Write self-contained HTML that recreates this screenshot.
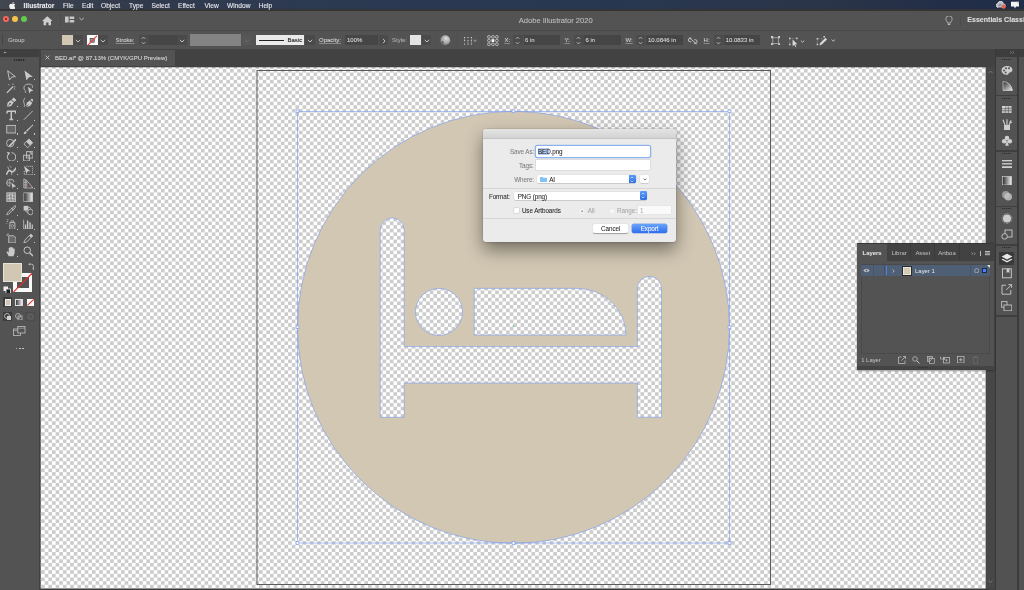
<!DOCTYPE html>
<html><head><meta charset="utf-8">
<style>
*{box-sizing:border-box}
html,body{margin:0;padding:0}
body{will-change:transform;width:1024px;height:590px;overflow:hidden;position:relative;background:#424242;font-family:"Liberation Sans",sans-serif;color:#d6d6d6}
.a{position:absolute}
span{-webkit-text-stroke:0.1px currentColor}
#dialog span{-webkit-text-stroke:0.05px currentColor}
#layers span{-webkit-text-stroke:0.03px currentColor}
#menubar{left:0;top:0;width:1024px;height:10.9px;overflow:hidden;background:linear-gradient(#0000 0 9.5px,#343434 9.5px),linear-gradient(90deg,#43474f 0%,#3b414d 4%,#313a4d 14%,#2c3a52 30%,#283750 60%,#2b3549 80%,#222e47 92%,#212e47 100%);color:#e8e8ec;font-size:7px;line-height:11.2px}
#menubar span{position:absolute;top:0;white-space:nowrap;font-size:6.6px}
#titlebar{left:0;top:10.9px;width:1024px;height:19.4px;background:#535353}
#controlbar{left:0;top:30.3px;width:1024px;height:18.8px;background:#535353;border-top:1.2px solid #4a4a4a;padding:0}
#tabbar{left:39px;top:49.1px;width:957px;height:18.2px;background:#424242}
#toolbar{left:0;top:49.1px;width:39px;height:541px;background:#535353}
#tbhead{left:0;top:49.1px;width:39px;height:7.5px;background:#3f3f3f}
.t6{font-size:6px;line-height:8px;top:4.6px;white-space:nowrap}
.u{text-decoration:underline;text-decoration-color:#8a8a8a;text-underline-offset:1px}
#vscroll{left:985.7px;top:67.3px;width:9px;height:520.6px;background:#474747}
#dock{left:994.5px;top:49.1px;width:29.5px;height:541px;background:#3d3d3d}
</style></head><body>
<svg class="a" style="left:0;top:0" width="1024" height="590" viewBox="0 0 1024 590">
<defs>
<pattern id="chk" patternUnits="userSpaceOnUse" x="41.1" y="65.3" width="7.265" height="7.265">
<rect x="0" y="0" width="7.265" height="7.265" fill="#ffffff"/>
<rect x="3.6325" y="0" width="3.6325" height="3.6325" fill="#cccccc"/>
<rect x="0" y="3.6325" width="3.6325" height="3.6325" fill="#cccccc"/>
</pattern>
</defs>
<rect x="40.7" y="67.3" width="945" height="521.2" fill="url(#chk)"/>
<rect x="257" y="70.5" width="513.5" height="514" fill="none" stroke="#5a5a5a" stroke-width="1"/>
<path fill="#d2c7b3" fill-rule="evenodd" d="M297.5,327.3 A216,216 0 1 0 729.5,327.3 A216,216 0 1 0 297.5,327.3 Z
M380.2,417.3 L380.2,230 A12,12 0 0 1 404.2,230 L404.2,346.6 L637.4,346.6 L637.4,288.5 A12.05,12.05 0 0 1 661.5,288.5 L661.5,417.2 L637.4,417.2 L637.4,383 L404.2,383 L404.2,417.3 Z
M415.5,311.9 A23.5,23.5 0 1 0 462.5,311.9 A23.5,23.5 0 1 0 415.5,311.9 Z
M474.2,288.4 L577,288.4 A49,46.6 0 0 1 626,335 L474.2,335 Z"/>
<g fill="none" stroke="#7f9ff0" stroke-width="0.65">
<path d="M297.5,327.3 A216,216 0 1 0 729.5,327.3 A216,216 0 1 0 297.5,327.3 Z
M380.2,417.3 L380.2,230 A12,12 0 0 1 404.2,230 L404.2,346.6 L637.4,346.6 L637.4,288.5 A12.05,12.05 0 0 1 661.5,288.5 L661.5,417.2 L637.4,417.2 L637.4,383 L404.2,383 L404.2,417.3 Z
M415.5,311.9 A23.5,23.5 0 1 0 462.5,311.9 A23.5,23.5 0 1 0 415.5,311.9 Z
M474.2,288.4 L577,288.4 A49,46.6 0 0 1 626,335 L474.2,335 Z"/>
<rect x="297.5" y="111.3" width="432" height="431.7"/>
</g>
<g fill="#fff" stroke="#7f9ff0" stroke-width="0.7">
<rect x="296.1" y="109.9" width="2.8" height="2.8"/>
<rect x="512.1" y="109.9" width="2.8" height="2.8"/>
<rect x="728.1" y="109.9" width="2.8" height="2.8"/>
<rect x="296.1" y="325.9" width="2.8" height="2.8"/>
<rect x="728.1" y="325.9" width="2.8" height="2.8"/>
<rect x="296.1" y="541.6" width="2.8" height="2.8"/>
<rect x="512.1" y="541.6" width="2.8" height="2.8"/>
<rect x="728.1" y="541.6" width="2.8" height="2.8"/>
</g>
<circle cx="513.5" cy="326" r="0.9" fill="#7fc58a"/>
</svg>
<div id="menubar" class="a">
<svg class="a" style="left:8.6px;top:1.6px" width="6.6" height="7.6" viewBox="0 0 14 17"><path fill="#f0f0f0" d="M11.6 9c0-2.2 1.8-3.2 1.9-3.3-1-1.5-2.6-1.7-3.1-1.7-1.3-.1-2.6.8-3.3.8-.7 0-1.7-.8-2.8-.8C2.9 4 1.5 4.9.8 6.2c-1.5 2.6-.4 6.5 1.1 8.6.7 1 1.6 2.2 2.7 2.2 1.1 0 1.5-.7 2.8-.7 1.3 0 1.7.7 2.8.7 1.2 0 1.9-1.1 2.6-2.1.8-1.2 1.2-2.3 1.2-2.4-.1 0-2.4-.9-2.4-3.5zM9.5 2.6c.6-.7 1-1.7.9-2.6-.8 0-1.9.5-2.5 1.2-.5.6-1 1.6-.9 2.6.9.1 1.9-.5 2.5-1.2z"/></svg>
<span style="left:23.6px;font-weight:bold;font-size:6.7px">Illustrator</span>
<span style="left:63px">File</span>
<span style="left:82px">Edit</span>
<span style="left:101px">Object</span>
<span style="left:129px">Type</span>
<span style="left:151.5px">Select</span>
<span style="left:178px">Effect</span>
<span style="left:204.5px">View</span>
<span style="left:227px">Window</span>
<span style="left:258.7px">Help</span>
<svg class="a" style="left:996px;top:1.4px" width="10" height="8" viewBox="0 0 10 8"><path d="M2.2 6.6 A2.3 2.3 0 0 1 1.8 2.2 A3 3 0 0 1 7.4 2.4 A2 2 0 0 1 7.8 6.6 Z" fill="#b8bcc4"/><path d="M2.2 6.6 A2.3 2.3 0 0 1 1.8 2.2 A3 3 0 0 1 7.4 2.4" fill="none" stroke="#eeeeee" stroke-width="0.9"/><path d="M3 5 A1.2 1.2 0 0 1 5.4 4.6" fill="none" stroke="#5a6070" stroke-width="0.7"/><circle cx="7.7" cy="5.7" r="2.1" fill="#ef6250"/></svg>
<svg class="a" style="left:1010px;top:1px" width="10" height="8.5" viewBox="0 0 10 8.5"><path d="M1 0.8 H9 V5.4 H6 L5 7.4 L4 5.4 H1 Z" fill="#f4f4f4"/><path d="M6.5 0.8 L9 0.8 L9 3.4 Z" fill="#c0c6d2"/></svg>
</div>
<div id="titlebar" class="a">
<div class="a" style="left:2.8px;top:5px;width:6px;height:6px;border-radius:50%;background:#f06a5e"></div><div class="a" style="left:4.8px;top:6.9px;width:2.1px;height:2.1px;border-radius:50%;background:#7c1d16"></div>
<div class="a" style="left:12px;top:5px;width:6px;height:6px;border-radius:50%;background:#f8c24e"></div>
<div class="a" style="left:21.1px;top:5px;width:6px;height:6px;border-radius:50%;background:#60cb4f"></div>
<svg class="a" style="left:42.2px;top:5.4px" width="10.6" height="9.6" viewBox="0 0 10 9"><path d="M5 0.3 L9.9 4.8 H8.5 V8.8 H6.1 V6.2 H3.9 V8.8 H1.5 V4.8 H0.1 Z" fill="#cdcdcd"/></svg>
<div class="a" style="left:59.5px;top:3.4px;width:0.8px;height:12px;background:#4c4c4c"></div>
<svg class="a" style="left:64.8px;top:5.1px" width="20" height="7" viewBox="0 0 20 7"><rect x="0" y="0.5" width="3.6" height="6" fill="#c8c8c8"/><rect x="4.6" y="0.5" width="4.6" height="2.5" fill="#c8c8c8"/><rect x="4.6" y="4" width="4.6" height="2.5" fill="#c8c8c8"/><path d="M14.4 1.9 L16.6 3.9 L18.8 1.9" fill="none" stroke="#c8c8c8" stroke-width="0.9"/></svg>
<span class="a" style="left:518.8px;top:4.9px;font-size:7.55px;line-height:9px;color:#bdbdbd;white-space:nowrap">Adobe Illustrator 2020</span>
<svg class="a" style="left:944.5px;top:4.9px" width="8" height="10" viewBox="0 0 8 10"><path d="M2.5 7 C2.5 5.5 0.8 4.8 0.8 3 A3.2 3.2 0 0 1 7.2 3 C7.2 4.8 5.5 5.5 5.5 7 Z" fill="none" stroke="#bdbdbd" stroke-width="0.8"/><rect x="2.8" y="7.6" width="2.4" height="1.4" fill="#bdbdbd"/></svg>
<div class="a" style="left:959.5px;top:3.9px;width:0.8px;height:11px;background:#4c4c4c"></div>
<span class="a" style="left:967.3px;top:4.4px;font-size:7.05px;line-height:9px;font-weight:bold;color:#dedede;white-space:nowrap">Essentials Classic</span>
</div>
<div id="controlbar" class="a">
<div class="a" style="left:1.8px;top:2.6px;width:1px;height:11.5px;background:#454545"></div>
<span class="a t6" style="left:7.9px;color:#bdbdbd">Group</span>
<div class="a" style="left:62px;top:3.4px;width:11px;height:10.8px;background:#d2c7b3"></div>
<div class="a" style="left:73.6px;top:3.4px;width:9.4px;height:10.8px;background:#4a4a4a"></div>
<svg class="a" style="left:75.3px;top:7.6px" width="6" height="4" viewBox="0 0 6 4"><path d="M0.8 0.9 L3 3 L5.2 0.9" fill="none" stroke="#d0d0d0" stroke-width="0.9"/></svg>
<div class="a" style="left:87.3px;top:3.4px;width:10.6px;height:10.8px;background:#fafafa"></div>
<svg class="a" style="left:87.3px;top:3.4px" width="10.6" height="10.4" viewBox="0 0 10.6 10.4"><rect x="3.2" y="3.4" width="4" height="3.8" fill="#9a9a9a" stroke="#505050" stroke-width="0.8"/><path d="M0.9 10.2 L9.9 0.8" stroke="#e8403a" stroke-width="1.2"/></svg>
<div class="a" style="left:98.4px;top:3.4px;width:9.6px;height:10.8px;background:#4a4a4a"></div>
<svg class="a" style="left:100.3px;top:7.6px" width="6" height="4" viewBox="0 0 6 4"><path d="M0.8 0.9 L3 3 L5.2 0.9" fill="none" stroke="#d0d0d0" stroke-width="0.9"/></svg>
<span class="a t6 u" style="left:115.5px;color:#d0d0d0">Stroke:</span>
<div class="a" style="left:139px;top:3.4px;width:9.5px;height:10.8px;background:#4b4b4b"></div>
<svg class="a" style="left:141.3px;top:5px" width="5" height="9" viewBox="0 0 5 9"><path d="M0.8 2.8 L2.5 1.1 L4.2 2.8 M0.8 6.2 L2.5 7.9 L4.2 6.2" fill="none" stroke="#cfcfcf" stroke-width="0.8"/></svg>
<div class="a" style="left:149px;top:3.4px;width:27.5px;height:10.8px;background:#464646"></div>
<div class="a" style="left:177.4px;top:3.4px;width:9.6px;height:10.8px;background:#4a4a4a"></div>
<svg class="a" style="left:179.3px;top:7.6px" width="6" height="4" viewBox="0 0 6 4"><path d="M0.8 0.9 L3 3 L5.2 0.9" fill="none" stroke="#d0d0d0" stroke-width="0.9"/></svg>
<div class="a" style="left:190.2px;top:2.5px;width:50.8px;height:12px;background:#838383"></div>
<div class="a" style="left:242px;top:3.4px;width:9.6px;height:10.8px;background:#575757"></div>
<svg class="a" style="left:244px;top:7.6px" width="6" height="4" viewBox="0 0 6 4"><path d="M0.8 0.9 L3 3 L5.2 0.9" fill="none" stroke="#6e6e6e" stroke-width="0.9"/></svg>
<div class="a" style="left:255.5px;top:3.4px;width:48.8px;height:10.8px;background:#ebebeb"></div>
<div class="a" style="left:258.5px;top:8.9px;width:25px;height:1.2px;background:#222"></div>
<span class="a t6" style="left:287.5px;color:#222">Basic</span>
<div class="a" style="left:305px;top:3.4px;width:9.6px;height:10.8px;background:#4a4a4a"></div>
<svg class="a" style="left:306.8px;top:7.6px" width="6" height="4" viewBox="0 0 6 4"><path d="M0.8 0.9 L3 3 L5.2 0.9" fill="none" stroke="#d0d0d0" stroke-width="0.9"/></svg>
<span class="a t6 u" style="left:319px;color:#d0d0d0">Opacity:</span>
<div class="a" style="left:345px;top:3.4px;width:33px;height:10.8px;background:#464646"></div>
<span class="a t6" style="left:347px;color:#d6d6d6">100%</span>
<div class="a" style="left:379px;top:3.4px;width:9.4px;height:10.8px;background:#4a4a4a"></div>
<svg class="a" style="left:381.5px;top:6.8px" width="4" height="6" viewBox="0 0 4 6"><path d="M1 0.8 L3 3 L1 5.2" fill="none" stroke="#d0d0d0" stroke-width="0.9"/></svg>
<span class="a t6" style="left:392px;color:#a8a8a8">Style:</span>
<div class="a" style="left:409.8px;top:3.4px;width:11.2px;height:10.8px;background:#e4e4e4"></div>
<div class="a" style="left:422px;top:3.4px;width:9.2px;height:10.8px;background:#4a4a4a"></div>
<svg class="a" style="left:423.6px;top:7.6px" width="6" height="4" viewBox="0 0 6 4"><path d="M0.8 0.9 L3 3 L5.2 0.9" fill="none" stroke="#d0d0d0" stroke-width="0.9"/></svg>
<div class="a" style="left:434.8px;top:3.5px;width:0.8px;height:12px;background:#505050"></div>
<svg class="a" style="left:440.3px;top:3.9px" width="10.5" height="10.5" viewBox="0 0 10.5 10.5"><defs><radialGradient id="glb" cx="0.6" cy="0.35" r="0.7"><stop offset="0" stop-color="#d8d8d8"/><stop offset="0.6" stop-color="#a8a8a8"/><stop offset="1" stop-color="#6a6a6a"/></radialGradient></defs><circle cx="5.25" cy="5.25" r="4.9" fill="url(#glb)"/><path d="M1.8 6.5 Q3 5.5 3.6 7.5 Q3.2 8.6 2.4 8" fill="#3a3a3a" opacity="0.8"/><path d="M5 2 Q7 2.5 6.5 4 Q5.5 4.5 5 3.5" fill="#eeeeee" opacity="0.6"/></svg>
<div class="a" style="left:456px;top:3.5px;width:0.8px;height:12px;background:#505050"></div>
<svg class="a" style="left:462.5px;top:5px" width="15" height="9" viewBox="0 0 15 9"><g fill="#cfcfcf"><rect x="1" y="1" width="1.1" height="1.1"/><rect x="4.4" y="1" width="1.1" height="1.1"/><rect x="7.8" y="1" width="1.1" height="1.1"/><rect x="1" y="4.1" width="1.1" height="1.1"/><rect x="4.4" y="4.1" width="1.1" height="1.1"/><rect x="7.8" y="4.1" width="1.1" height="1.1"/><rect x="1" y="7.5" width="1.1" height="1.1"/><rect x="4.4" y="7.5" width="1.1" height="1.1"/><rect x="7.8" y="7.5" width="1.1" height="1.1"/></g><g fill="#9a9a9a"><rect x="1.2" y="2.3" width="0.7" height="1.6"/><rect x="4.6" y="5.4" width="0.7" height="1.9"/><rect x="8" y="2.3" width="0.7" height="1.6"/><rect x="8" y="5.4" width="0.7" height="1.9"/></g><path d="M10.6 4 L12.1 5.3 L13.6 4" fill="none" stroke="#c8c8c8" stroke-width="0.8"/></svg>
<div class="a" style="left:480.6px;top:3.5px;width:0.8px;height:12px;background:#505050"></div>
<svg class="a" style="left:487.3px;top:3.6px" width="11.8" height="11.2" viewBox="0 0 11.8 11.2"><g fill="none" stroke="#d4d4d4" stroke-width="0.75"><circle cx="1.9" cy="1.9" r="1.4"/><circle cx="5.9" cy="1.9" r="1.4"/><circle cx="9.9" cy="1.9" r="1.4"/><circle cx="1.9" cy="5.6" r="1.4"/><circle cx="9.9" cy="5.6" r="1.4"/><circle cx="1.9" cy="9.3" r="1.4"/><circle cx="5.9" cy="9.3" r="1.4"/><circle cx="9.9" cy="9.3" r="1.4"/></g><rect x="4.5" y="4.2" width="2.8" height="2.8" fill="#f6f6f6"/></svg>
<span class="a t6 u" style="left:504.4px;color:#d0d0d0">X:</span>
<div class="a" style="left:512.9px;top:3.4px;width:10px;height:10.6px;background:#4b4b4b"></div>
<svg class="a" style="left:515.4px;top:5.2px" width="5" height="9" viewBox="0 0 5 9"><path d="M0.8 2.8 L2.5 1.1 L4.2 2.8 M0.8 6.2 L2.5 7.9 L4.2 6.2" fill="none" stroke="#cfcfcf" stroke-width="0.8"/></svg>
<div class="a" style="left:523.8px;top:3.4px;width:36.4px;height:10.6px;background:#454545"></div>
<span class="a t6" style="left:525px;color:#d6d6d6">6 in</span>
<span class="a t6 u" style="left:564.4px;color:#d0d0d0">Y:</span>
<div class="a" style="left:574px;top:3.4px;width:9.6px;height:10.6px;background:#4b4b4b"></div>
<svg class="a" style="left:576.4px;top:5.2px" width="5" height="9" viewBox="0 0 5 9"><path d="M0.8 2.8 L2.5 1.1 L4.2 2.8 M0.8 6.2 L2.5 7.9 L4.2 6.2" fill="none" stroke="#cfcfcf" stroke-width="0.8"/></svg>
<div class="a" style="left:584px;top:3.4px;width:36.6px;height:10.6px;background:#454545"></div>
<span class="a t6" style="left:585.5px;color:#d6d6d6">6 in</span>
<span class="a t6 u" style="left:625.5px;color:#d0d0d0">W:</span>
<div class="a" style="left:635.5px;top:3.4px;width:9.8px;height:10.6px;background:#4b4b4b"></div>
<svg class="a" style="left:638px;top:5.2px" width="5" height="9" viewBox="0 0 5 9"><path d="M0.8 2.8 L2.5 1.1 L4.2 2.8 M0.8 6.2 L2.5 7.9 L4.2 6.2" fill="none" stroke="#cfcfcf" stroke-width="0.8"/></svg>
<div class="a" style="left:646px;top:3.4px;width:36.7px;height:10.6px;background:#454545"></div>
<span class="a t6" style="left:648px;color:#d6d6d6">10.0846 in</span>
<svg class="a" style="left:688.3px;top:5.8px" width="9.5" height="7.5" viewBox="0 0 9.5 7.5"><g fill="none" stroke="#cfcfcf" stroke-width="0.9"><path d="M3.6 1.2 H2.2 A1.8 1.8 0 0 0 2.2 4.8 H3.2"/><path d="M5.9 6.3 H7.3 A1.8 1.8 0 0 0 7.3 2.7 H6.3"/><path d="M1 0.6 L8.6 7"/></g></svg>
<span class="a t6 u" style="left:703.6px;color:#d0d0d0">H:</span>
<div class="a" style="left:713.6px;top:3.4px;width:9.6px;height:10.6px;background:#4b4b4b"></div>
<svg class="a" style="left:716px;top:5.2px" width="5" height="9" viewBox="0 0 5 9"><path d="M0.8 2.8 L2.5 1.1 L4.2 2.8 M0.8 6.2 L2.5 7.9 L4.2 6.2" fill="none" stroke="#cfcfcf" stroke-width="0.8"/></svg>
<div class="a" style="left:723.7px;top:3.4px;width:36.5px;height:10.6px;background:#454545"></div>
<span class="a t6" style="left:725.6px;color:#d6d6d6">10.0833 in</span>
<div class="a" style="left:765.7px;top:3.5px;width:0.8px;height:12px;background:#525252"></div>
<svg class="a" style="left:770.8px;top:4.8px" width="9.4" height="9.4" viewBox="0 0 9.4 9.4"><g fill="#d2d2d2"><rect x="0" y="0" width="2.2" height="2.2"/><rect x="7.2" y="0" width="2.2" height="2.2"/><rect x="0" y="7.2" width="2.2" height="2.2"/><rect x="7.2" y="7.2" width="2.2" height="2.2"/></g><rect x="1.8" y="1.8" width="5.8" height="5.8" fill="none" stroke="#bdbdbd" stroke-width="0.7"/></svg>
<svg class="a" style="left:788px;top:4.3px" width="18.5" height="11" viewBox="0 0 18.5 11"><g fill="#c8c8c8"><rect x="1" y="1.6" width="1.6" height="1.6"/><rect x="8" y="1.6" width="1.6" height="1.6"/><rect x="1" y="7.6" width="1.6" height="1.6"/></g><path d="M2.6 2.4 H8 M1.8 3.2 V7.6" stroke="#a8a8a8" stroke-width="0.6" stroke-dasharray="0.8 0.6"/><path d="M4.6 3.6 L4.6 10.2 L6.2 8.8 L7.6 11 L8.4 10.5 L7.1 8.3 L9.3 8.2 Z" fill="#dadada"/><path d="M12.9 4.6 L14.6 6.2 L16.3 4.6" fill="none" stroke="#cfcfcf" stroke-width="0.9"/></svg>
<svg class="a" style="left:815.5px;top:4px" width="23" height="11" viewBox="0 0 23 11"><g fill="#c8c8c8"><rect x="0.6" y="3" width="1.6" height="1.6"/><rect x="7.4" y="1" width="1.6" height="1.6"/><rect x="0.6" y="8.6" width="1.6" height="1.6"/></g><path d="M2.2 3.8 H7.4 M1.4 4.6 V8.6" stroke="#a8a8a8" stroke-width="0.6" stroke-dasharray="0.8 0.6"/><path d="M3.4 10.4 L4.2 8 L9.4 2.8 L11 4.4 L5.8 9.6 Z" fill="#dadada"/><path d="M15.6 4.6 L17.3 6.2 L19 4.6" fill="none" stroke="#cfcfcf" stroke-width="0.9"/></svg>
<div class="a" style="left:810.6px;top:3.5px;width:0.8px;height:12px;background:#525252"></div>
</div>
<div id="tabbar" class="a">
<div class="a" style="left:2px;top:0.9px;width:133.5px;height:16.1px;background:#535353"></div>
<svg class="a" style="left:5.6px;top:6.2px" width="5" height="5" viewBox="0 0 5 5"><path d="M0.6 0.6 L4.4 4.4 M4.4 0.6 L0.6 4.4" stroke="#d0d0d0" stroke-width="0.8"/></svg>
<span class="a" style="left:16px;top:4.9px;font-size:6.06px;line-height:8px;color:#d4d4d4;white-space:nowrap">BED.ai* @ 87.13% (CMYK/GPU Preview)</span>
</div>
<div id="toolbar" class="a"></div>
<div id="tbhead" class="a"></div>
<div id="tbitems">
<div class="a" style="left:3.6px;top:52.2px;width:1px;height:1px;background:#a8a8a8;box-shadow:1.4px 0 0 #a8a8a8,0 0 0 0.2px #888"></div>
<div class="a" style="left:14px;top:59.2px;width:11px;height:1.4px;background:repeating-linear-gradient(90deg,#2e2e2e 0 1.2px,#4a4a4a 1.2px 2.2px)"></div>
<svg class="a" style="left:5.90px;top:69.50px" width="10.6" height="10.6" viewBox="0 0 10 10"><path d="M1.6 0.7 L8.9 6.3 L5.5 6.6 L3.3 9.5 Z" fill="none" stroke="#c9c9c9" stroke-width="0.85" stroke-linejoin="round"/></svg>
<svg class="a" style="left:22.90px;top:69.50px" width="10.6" height="10.6" viewBox="0 0 10 10"><path d="M1.4 0.5 L9.2 6.4 L5.6 6.8 L3.2 9.8 Z" fill="#c9c9c9"/></svg>
<div class="a" style="left:33.80px;top:79.20px;width:1.3px;height:1.3px;background:#c4c4c4"></div>
<svg class="a" style="left:5.90px;top:83.00px" width="10.6" height="10.6" viewBox="0 0 10 10"><path d="M0.8 9.3 L6.8 3.3" stroke="#c9c9c9" stroke-width="1.2"/><path d="M2.6 1.2 L3 2.2 M6.6 0.6 L6.6 1.8 M8.9 3.6 L7.7 3.6 M8.6 5.9 L7.6 5.4" stroke="#c9c9c9" stroke-width="0.8"/></svg>
<svg class="a" style="left:22.90px;top:83.00px" width="10.6" height="10.6" viewBox="0 0 10 10"><path d="M2.2 7.2 C-0.2 5.6 0.6 1.2 5 1 C8.8 0.9 10 3.4 8.4 4.8" fill="none" stroke="#c9c9c9" stroke-width="0.8"/><path d="M2.2 7.2 Q1.4 8.8 3 9.4" fill="none" stroke="#c9c9c9" stroke-width="0.7"/><path d="M4.6 3.6 L9.8 7.4 L7.3 7.7 L5.9 10 Z" fill="#c9c9c9"/></svg>
<svg class="a" style="left:5.90px;top:96.50px" width="10.6" height="10.6" viewBox="0 0 10 10"><path d="M0.7 9.4 L1.6 5.2 L4.8 2.8 L7.3 5.3 L4.9 8.5 Z" fill="#c9c9c9"/><path d="M0.7 9.4 L3.6 6.5" stroke="#535353" stroke-width="0.7"/><circle cx="3.9" cy="6.2" r="0.8" fill="#535353"/><path d="M5.3 2.3 L7.3 0.4 L9.7 2.8 L7.8 4.8 Z" fill="#c9c9c9"/></svg>
<div class="a" style="left:16.80px;top:106.20px;width:1.3px;height:1.3px;background:#c4c4c4"></div>
<svg class="a" style="left:22.90px;top:96.50px" width="10.6" height="10.6" viewBox="0 0 10 10"><path d="M2.8 9.4 L3.6 5.4 L6.4 3.3 L8.7 5.6 L6.6 8.4 Z" fill="#c9c9c9"/><path d="M2.8 9.4 L5.2 7" stroke="#535353" stroke-width="0.7"/><path d="M6.9 2.8 L8.4 1.3 L10 2.9 L9.2 4.6 Z" fill="#c9c9c9"/><path d="M1.6 0.8 Q-0.4 4 1.2 6.6 Q2 8.2 1 9.6" fill="none" stroke="#c9c9c9" stroke-width="0.7"/></svg>
<svg class="a" style="left:5.90px;top:110.10px" width="10.6" height="10.6" viewBox="0 0 10 10"><path d="M1 1.2 H9 V3.2 M1 1.2 V3.2 M5 1.2 V8.9 M3.2 8.9 H6.8" fill="none" stroke="#c9c9c9" stroke-width="1.4"/></svg>
<div class="a" style="left:16.80px;top:119.80px;width:1.3px;height:1.3px;background:#c4c4c4"></div>
<svg class="a" style="left:22.90px;top:110.10px" width="10.6" height="10.6" viewBox="0 0 10 10"><path d="M0.8 9.2 L9.2 0.8" stroke="#c9c9c9" stroke-width="0.85"/></svg>
<div class="a" style="left:33.80px;top:119.80px;width:1.3px;height:1.3px;background:#c4c4c4"></div>
<svg class="a" style="left:5.90px;top:123.70px" width="10.6" height="10.6" viewBox="0 0 10 10"><rect x="0.7" y="1.3" width="8.6" height="7.2" fill="#666" stroke="#c9c9c9" stroke-width="0.8"/></svg>
<div class="a" style="left:16.80px;top:133.40px;width:1.3px;height:1.3px;background:#c4c4c4"></div>
<svg class="a" style="left:22.90px;top:123.70px" width="10.6" height="10.6" viewBox="0 0 10 10"><path d="M0.6 9.6 Q0.6 7.2 2.4 6.8 L3.4 7.8 Q3.4 9.6 0.6 9.6 Z" fill="#c9c9c9"/><path d="M2.9 6.4 L9.2 0.4 L9.7 0.9 L3.8 7.3 Z" fill="#c9c9c9"/></svg>
<div class="a" style="left:33.80px;top:133.40px;width:1.3px;height:1.3px;background:#c4c4c4"></div>
<svg class="a" style="left:5.90px;top:137.30px" width="10.6" height="10.6" viewBox="0 0 10 10"><circle cx="4" cy="5.8" r="3.5" fill="none" stroke="#c9c9c9" stroke-width="0.8"/><path d="M3.2 8.6 L9.4 2.2" stroke="#c9c9c9" stroke-width="1.5"/></svg>
<div class="a" style="left:16.80px;top:147.00px;width:1.3px;height:1.3px;background:#c4c4c4"></div>
<svg class="a" style="left:22.90px;top:137.30px" width="10.6" height="10.6" viewBox="0 0 10 10"><path d="M0.8 6.6 L5.6 1.8 L9.2 5.4 L4.4 10.2 Z" fill="none" stroke="#c9c9c9" stroke-width="0.8"/><path d="M3 4.4 L5.6 1.8 L9.2 5.4 L6.6 8 Z" fill="#c9c9c9"/></svg>
<div class="a" style="left:33.80px;top:147.00px;width:1.3px;height:1.3px;background:#c4c4c4"></div>
<svg class="a" style="left:5.90px;top:150.90px" width="10.6" height="10.6" viewBox="0 0 10 10"><path d="M2.2 3 A4 4 0 1 0 5.2 1.6" fill="none" stroke="#c9c9c9" stroke-width="0.9"/><path d="M0.8 1 L3.8 1.4 L2.6 4.2 Z" fill="#c9c9c9"/></svg>
<div class="a" style="left:16.80px;top:160.60px;width:1.3px;height:1.3px;background:#c4c4c4"></div>
<svg class="a" style="left:22.90px;top:150.90px" width="10.6" height="10.6" viewBox="0 0 10 10"><rect x="0.6" y="4" width="5.4" height="5.4" fill="none" stroke="#c9c9c9" stroke-width="0.8"/><rect x="3.4" y="0.6" width="6" height="6" fill="none" stroke="#c9c9c9" stroke-width="0.8"/><path d="M4.5 5.5 L8.4 1.6 M6 1.6 H8.4 V4" fill="none" stroke="#c9c9c9" stroke-width="0.7"/></svg>
<div class="a" style="left:33.80px;top:160.60px;width:1.3px;height:1.3px;background:#c4c4c4"></div>
<svg class="a" style="left:5.90px;top:164.50px" width="10.6" height="10.6" viewBox="0 0 10 10"><path d="M0.4 9.2 Q2.4 3.6 4.6 5.8 Q6.8 8 9.6 2.4" fill="none" stroke="#c9c9c9" stroke-width="1.4"/><path d="M1.6 1.6 L3.2 5.2 M5 6 L5.6 9.6" stroke="#c9c9c9" stroke-width="0.7"/><path d="M3.4 0.6 L5 2.6 M7 4 L8.6 6" stroke="#c9c9c9" stroke-width="0.6"/></svg>
<div class="a" style="left:16.80px;top:174.20px;width:1.3px;height:1.3px;background:#c4c4c4"></div>
<svg class="a" style="left:22.90px;top:164.50px" width="10.6" height="10.6" viewBox="0 0 10 10"><path d="M3 1.2 H9.2 V9.2 H1.2 V5" fill="none" stroke="#c9c9c9" stroke-width="0.8" stroke-dasharray="1.2 0.7"/><path d="M0.8 0.8 L7 5.8 L4.5 6 L3.2 8.5 Z" fill="#c9c9c9"/></svg>
<div class="a" style="left:33.80px;top:174.20px;width:1.3px;height:1.3px;background:#c4c4c4"></div>
<svg class="a" style="left:5.90px;top:178.10px" width="10.6" height="10.6" viewBox="0 0 10 10"><path d="M0.6 4.6 Q0.6 1.2 4.2 1.2 Q7.6 1.2 7.6 4 M0.6 4.6 Q0.6 7.6 3.8 7.8" fill="none" stroke="#c9c9c9" stroke-width="0.8"/><path d="M0.6 4.6 H5 M3.6 1.2 V7.8" stroke="#c9c9c9" stroke-width="0.6"/><path d="M5 4.2 L9.8 8 L7.4 8.2 L6.2 10 Z" fill="#c9c9c9"/></svg>
<div class="a" style="left:16.80px;top:187.80px;width:1.3px;height:1.3px;background:#c4c4c4"></div>
<svg class="a" style="left:22.90px;top:178.10px" width="10.6" height="10.6" viewBox="0 0 10 10"><path d="M0.8 0.8 L3.6 2.4 V9.4 H0.8 Z M3.6 2.4 L9.4 9.4 H3.6" fill="none" stroke="#c9c9c9" stroke-width="0.7"/><path d="M0.8 4 H3.6 M0.8 6.6 H3.6 M2.2 1.6 V9.4" stroke="#c9c9c9" stroke-width="0.6"/><path d="M3.6 5 L7 9.4 H3.6 Z" fill="#8a5a5a" opacity="0.7"/></svg>
<div class="a" style="left:33.80px;top:187.80px;width:1.3px;height:1.3px;background:#c4c4c4"></div>
<svg class="a" style="left:5.90px;top:191.70px" width="10.6" height="10.6" viewBox="0 0 10 10"><rect x="0.8" y="0.8" width="8.4" height="8.4" fill="#8a8a8a" stroke="#c9c9c9" stroke-width="0.8"/><path d="M0.8 3.6 Q5 1.6 9.2 4.2 M0.8 6.4 Q5 4.8 9.2 6.8 M3.6 0.8 Q2.6 5 4 9.2 M6.4 0.8 Q5.6 5 6.6 9.2" fill="none" stroke="#dcdcdc" stroke-width="0.6"/></svg>
<svg class="a" style="left:22.90px;top:191.70px" width="10.6" height="10.6" viewBox="0 0 10 10"><defs><linearGradient id="tg" x1="0" x2="1"><stop offset="0" stop-color="#2e2e2e"/><stop offset="1" stop-color="#f4f4f4"/></linearGradient></defs><rect x="0.8" y="0.8" width="8.4" height="8.4" fill="url(#tg)" stroke="#c9c9c9" stroke-width="0.6"/></svg>
<svg class="a" style="left:5.90px;top:205.30px" width="10.6" height="10.6" viewBox="0 0 10 10"><path d="M0.8 9.2 L1.2 7.6 L5.6 3.2 L6.8 4.4 L2.4 8.8 Z" fill="none" stroke="#c9c9c9" stroke-width="0.8"/><path d="M4.8 2.6 L7.2 5 M5.8 3.2 L8.2 0.8 Q9 0.4 9.4 1 Q9.6 1.6 9 2.2 L6.8 4.4" fill="none" stroke="#c9c9c9" stroke-width="0.9"/></svg>
<div class="a" style="left:16.80px;top:215.00px;width:1.3px;height:1.3px;background:#c4c4c4"></div>
<svg class="a" style="left:22.90px;top:205.30px" width="10.6" height="10.6" viewBox="0 0 10 10"><rect x="0.6" y="0.8" width="4.4" height="4.4" fill="#c9c9c9"/><circle cx="5" cy="4.6" r="2.6" fill="none" stroke="#c9c9c9" stroke-width="0.7"/><circle cx="7" cy="6.6" r="2.6" fill="#535353" stroke="#c9c9c9" stroke-width="0.8"/></svg>
<svg class="a" style="left:5.90px;top:218.90px" width="10.6" height="10.6" viewBox="0 0 10 10"><path d="M3.6 3.4 H8.4 V9.6 H3.6 Z" fill="none" stroke="#c9c9c9" stroke-width="0.8"/><path d="M4.8 3.4 V1.8 H7.2 V3.4" fill="none" stroke="#c9c9c9" stroke-width="0.7"/><circle cx="6" cy="6.4" r="1.2" fill="none" stroke="#c9c9c9" stroke-width="0.6"/><path d="M0.6 0.8 H2.4 M0.6 2.4 H2 M0.6 3.8 V4.6" stroke="#c9c9c9" stroke-width="0.6"/></svg>
<div class="a" style="left:16.80px;top:228.60px;width:1.3px;height:1.3px;background:#c4c4c4"></div>
<svg class="a" style="left:22.90px;top:218.90px" width="10.6" height="10.6" viewBox="0 0 10 10"><path d="M0.6 0.6 V9.4 H9.6" fill="none" stroke="#c9c9c9" stroke-width="0.7"/><rect x="1.8" y="5.2" width="1.2" height="4" fill="#c9c9c9"/><rect x="3.7" y="1.4" width="1.3" height="7.8" fill="#c9c9c9"/><rect x="6" y="3.2" width="1.3" height="6" fill="#c9c9c9"/><rect x="8.2" y="5.2" width="1.1" height="4" fill="#c9c9c9"/></svg>
<div class="a" style="left:33.80px;top:228.60px;width:1.3px;height:1.3px;background:#c4c4c4"></div>
<svg class="a" style="left:5.90px;top:232.50px" width="10.6" height="10.6" viewBox="0 0 10 10"><path d="M2.6 2.6 H7.4 L9.4 4.6 V9.4 H2.6 Z" fill="#6a6a6a" stroke="#c9c9c9" stroke-width="0.8"/><path d="M2 0.2 V2 H0.2" fill="none" stroke="#c9c9c9" stroke-width="0.7"/></svg>
<svg class="a" style="left:22.90px;top:232.50px" width="10.6" height="10.6" viewBox="0 0 10 10"><path d="M0.8 9.4 L1.8 6.6 L7.4 1 L9.2 2.8 L3.6 8.4 Z" fill="none" stroke="#c9c9c9" stroke-width="0.8"/><path d="M5.8 2.6 L7.4 1 L9.2 2.8 L7.6 4.4 Z" fill="#c9c9c9"/></svg>
<div class="a" style="left:33.80px;top:242.20px;width:1.3px;height:1.3px;background:#c4c4c4"></div>
<svg class="a" style="left:5.90px;top:246.10px" width="10.6" height="10.6" viewBox="0 0 10 10"><path d="M2.6 9.6 L0.6 6.2 Q0.2 5 1.4 5.2 L2.6 6.2 V1.8 Q3.3 0.9 4 1.8 V4.6 V1 Q4.7 0.2 5.4 1 V4.6 V1.6 Q6.1 0.9 6.8 1.6 V4.8 V2.6 Q7.5 1.9 8.2 2.6 V6.6 L7 9.6 Z" fill="#c9c9c9"/></svg>
<div class="a" style="left:16.80px;top:255.80px;width:1.3px;height:1.3px;background:#c4c4c4"></div>
<svg class="a" style="left:22.90px;top:246.10px" width="10.6" height="10.6" viewBox="0 0 10 10"><circle cx="4" cy="4" r="3.1" fill="none" stroke="#c9c9c9" stroke-width="0.9"/><path d="M6.3 6.3 L9.4 9.4" stroke="#c9c9c9" stroke-width="1.4"/></svg>
<div class="a" style="left:13.2px;top:272.8px;width:19.3px;height:19.5px;background:#fafafa"></div>
<div class="a" style="left:17px;top:276.6px;width:11.7px;height:11.9px;background:#535353"></div>
<svg class="a" style="left:13.2px;top:272.8px" width="19.3" height="19.5" viewBox="0 0 19.3 19.5"><path d="M0.4 19.1 L18.9 0.4" stroke="#e52f2a" stroke-width="1.2"/></svg>
<div class="a" style="left:3px;top:262.6px;width:19.4px;height:19.5px;background:#d2c7b3;border:0.6px solid #e8e2d6"></div>
<svg class="a" style="left:27.6px;top:262.6px" width="6.5" height="7" viewBox="0 0 6.5 7"><path d="M1 1.2 H3.6 Q5.4 1.2 5.4 3 V6" fill="none" stroke="#c8c8c8" stroke-width="0.8"/><path d="M0.3 1.2 L1.8 0 V2.4 Z M4.2 5.6 L6.6 5.6 L5.4 7 Z" fill="#c8c8c8"/></svg>
<svg class="a" style="left:2.5px;top:285.5px" width="8" height="7.5" viewBox="0 0 8 7.5"><rect x="0.5" y="0.5" width="4.5" height="4.5" fill="#f0f0f0"/><rect x="3" y="3" width="4.5" height="4.5" fill="#1e1e1e" stroke="#f0f0f0" stroke-width="0.8"/></svg>
<div class="a" style="left:3px;top:297.4px;width:9.2px;height:10.1px;background:#3c3c3c"></div>
<div class="a" style="left:4.7px;top:299.2px;width:6.3px;height:6.6px;background:#d2c7b3;border:0.5px solid #eee"></div>
<div class="a" style="left:15.3px;top:299.2px;width:7.6px;height:6.6px;background:linear-gradient(90deg,#3a3a3a,#f0f0f0);border:0.5px solid #ddd"></div>
<div class="a" style="left:26.5px;top:299.2px;width:7.4px;height:6.6px;background:#fafafa"></div>
<svg class="a" style="left:26.5px;top:299.2px" width="7.4" height="6.6" viewBox="0 0 7.4 6.6"><path d="M0.4 6.3 L7 0.3" stroke="#e52f2a" stroke-width="1.1"/></svg>
<div class="a" style="left:3px;top:311.8px;width:9.2px;height:9.3px;background:#3c3c3c"></div>
<svg class="a" style="left:4px;top:312.8px" width="7.4" height="7.4" viewBox="0 0 7.4 7.4"><circle cx="3" cy="3" r="2.5" fill="none" stroke="#cfcfcf" stroke-width="0.8"/><rect x="3" y="3" width="4" height="4" fill="#cfcfcf"/></svg>
<svg class="a" style="left:15.3px;top:312.8px" width="7.4" height="7.4" viewBox="0 0 7.4 7.4"><circle cx="3" cy="3" r="2.5" fill="none" stroke="#bcbcbc" stroke-width="0.8"/><rect x="3" y="3" width="4" height="4" fill="none" stroke="#bcbcbc" stroke-width="0.8"/></svg>
<div class="a" style="left:24.7px;top:311.8px;width:10px;height:9.3px;border:0.5px solid #4c4c4c"></div>
<svg class="a" style="left:26.5px;top:312.8px" width="7.4" height="7.4" viewBox="0 0 7.4 7.4"><circle cx="3.7" cy="3.7" r="2.5" fill="none" stroke="#6d6d6d" stroke-width="0.8"/></svg>
<svg class="a" style="left:13.2px;top:326px" width="12.5" height="10" viewBox="0 0 12.5 10"><rect x="0.5" y="3" width="7" height="6.5" fill="#535353" stroke="#c0c0c0" stroke-width="0.8"/><rect x="4.8" y="0.5" width="7.2" height="6.5" fill="#535353" stroke="#c0c0c0" stroke-width="0.8"/><path d="M4.8 2.2 H12 M0.5 4.6 H4.8" stroke="#c0c0c0" stroke-width="0.6"/></svg>
<div class="a" style="left:15.5px;top:347.6px;width:1.9px;height:1.9px;background:#dcdcdc;border-radius:0.4px"></div>
<div class="a" style="left:18.8px;top:347.6px;width:1.9px;height:1.9px;background:#dcdcdc;border-radius:0.4px"></div>
<div class="a" style="left:22.1px;top:347.6px;width:1.9px;height:1.9px;background:#dcdcdc;border-radius:0.4px"></div>
</div>
<div id="vscroll" class="a"></div>
<div id="dock" class="a"></div>
<div id="dockitems">
<div class="a" style="left:994.5px;top:49.1px;width:1.2px;height:541px;background:#383838"></div>
<div class="a" style="left:995.7px;top:57px;width:21.4px;height:533px;background:#525252"></div>
<div class="a" style="left:995.7px;top:57px;width:21.4px;height:258.5px;background:#535353"></div>
<div class="a" style="left:1017.1px;top:49.1px;width:1.6px;height:541px;background:#3a3a3a"></div>
<div class="a" style="left:1018.7px;top:57px;width:5.3px;height:533px;background:#525252"></div>
<svg class="a" style="left:1010px;top:51.4px" width="4.5" height="3" viewBox="0 0 4.5 3"><path d="M0.3 0.3 L1.6 1.5 L0.3 2.7 M2.6 0.3 L3.9 1.5 L2.6 2.7" fill="none" stroke="#a0a0a0" stroke-width="0.6"/></svg>
<div class="a" style="left:1002px;top:59.0px;width:9px;height:1.3px;background:repeating-linear-gradient(90deg,#2f2f2f 0 1.1px,#474747 1.1px 1.9px)"></div>
<div class="a" style="left:995.5px;top:94.8px;width:21.6px;height:1.5px;background:#3f3f3f"></div>
<div class="a" style="left:1002px;top:98.0px;width:9px;height:1.3px;background:repeating-linear-gradient(90deg,#2f2f2f 0 1.1px,#474747 1.1px 1.9px)"></div>
<div class="a" style="left:995.5px;top:150.3px;width:21.6px;height:1.5px;background:#3f3f3f"></div>
<div class="a" style="left:1002px;top:153.10000000000002px;width:9px;height:1.3px;background:repeating-linear-gradient(90deg,#2f2f2f 0 1.1px,#474747 1.1px 1.9px)"></div>
<div class="a" style="left:995.5px;top:205.5px;width:21.6px;height:1.5px;background:#3f3f3f"></div>
<div class="a" style="left:1002px;top:208.0px;width:9px;height:1.3px;background:repeating-linear-gradient(90deg,#2f2f2f 0 1.1px,#474747 1.1px 1.9px)"></div>
<div class="a" style="left:995.5px;top:244.4px;width:21.6px;height:1.5px;background:#3f3f3f"></div>
<div class="a" style="left:1002px;top:246.9px;width:9px;height:1.3px;background:repeating-linear-gradient(90deg,#2f2f2f 0 1.1px,#474747 1.1px 1.9px)"></div>
<div class="a" style="left:995.5px;top:315px;width:21.6px;height:1.5px;background:#3f3f3f"></div>
<svg class="a" style="left:1000.8px;top:64.5px" width="12" height="11" viewBox="0 0 12 11"><path d="M6 1 C2.5 1 0.5 3.2 0.6 5.6 C0.7 8.6 3.6 10 6.5 9.8 C8 9.7 7.2 8 8.6 7.6 C10.4 7.2 11.6 6.6 11.4 4.6 C11.2 2.4 9 1 6 1 Z" fill="#cdcdcd"/><circle cx="3" cy="5.4" r="1" fill="#535353"/><circle cx="5" cy="3.2" r="1" fill="#535353"/><circle cx="8" cy="3.2" r="1" fill="#535353"/><circle cx="4.6" cy="7.6" r="1" fill="#535353"/></svg>
<svg class="a" style="left:1001.5px;top:80.6px" width="11" height="10" viewBox="0 0 11 10"><defs><linearGradient id="dg1" x1="0" y1="0" x2="1" y2="1"><stop offset="0" stop-color="#2a2a2a"/><stop offset="1" stop-color="#f2f2f2"/></linearGradient></defs><path d="M1 0.5 Q9 1 10.5 9.5 H1 Z" fill="url(#dg1)" stroke="#d0d0d0" stroke-width="0.7"/></svg>
<svg class="a" style="left:1002px;top:106px" width="9.6" height="7" viewBox="0 0 9.6 7"><rect x="0" y="0" width="9.6" height="7" fill="#c4c4c4"/><path d="M0 2.4 H9.6 M0 4.7 H9.6 M3.2 0.6 V7 M6.4 0.6 V7" stroke="#535353" stroke-width="0.6"/><rect x="0.3" y="0.3" width="2.6" height="1.8" fill="#e0e0e0"/></svg>
<svg class="a" style="left:1000.8px;top:119.0px" width="12" height="12" viewBox="0 0 12 12"><rect x="3" y="6" width="6" height="5" fill="#cdcdcd"/><path d="M4 6 L2 0.8 M6 6 V0.3 M8 6 L10.2 1.2" stroke="#cdcdcd" stroke-width="1.1"/><path d="M8.5 2 L11.5 3.5 L9.5 4.5 Z" fill="#cdcdcd"/></svg>
<svg class="a" style="left:1000.8px;top:134.8px" width="12" height="11" viewBox="0 0 12 11"><circle cx="6" cy="3" r="2.3" fill="#cdcdcd"/><circle cx="3.2" cy="6.3" r="2.3" fill="#cdcdcd"/><circle cx="8.8" cy="6.3" r="2.3" fill="#cdcdcd"/><path d="M6 5 L4.2 10.8 H7.8 Z" fill="#cdcdcd"/></svg>
<svg class="a" style="left:1000.8px;top:159.0px" width="12" height="10" viewBox="0 0 12 10"><rect x="1" y="1" width="10" height="1.4" fill="#cdcdcd"/><rect x="1" y="4.1" width="10" height="1.4" fill="#cdcdcd"/><rect x="1" y="7.2" width="10" height="1.8" fill="#cdcdcd"/></svg>
<svg class="a" style="left:1001.8px;top:175.5px" width="10" height="9.5" viewBox="0 0 10 9.5"><defs><linearGradient id="dg2" x1="0" x2="1"><stop offset="0" stop-color="#2a2a2a"/><stop offset="1" stop-color="#f2f2f2"/></linearGradient></defs><rect x="0.5" y="0.5" width="9" height="8.5" fill="url(#dg2)" stroke="#cfcfcf" stroke-width="0.7"/></svg>
<svg class="a" style="left:1000.8px;top:190.05px" width="12" height="11.5" viewBox="0 0 12 11.5"><circle cx="4.8" cy="4.8" r="3.8" fill="#9a9a9a"/><circle cx="7.2" cy="6.8" r="3.8" fill="#c2c2c2" opacity="0.85"/></svg>
<svg class="a" style="left:1000.8px;top:213.3px" width="12" height="11" viewBox="0 0 12 11"><circle cx="6" cy="5.5" r="4" fill="#cdcdcd"/><circle cx="6" cy="5.5" r="4.9" fill="none" stroke="#cdcdcd" stroke-width="0.7" stroke-dasharray="0.8 0.8"/></svg>
<svg class="a" style="left:1000.8px;top:229.2px" width="12" height="11" viewBox="0 0 12 11"><rect x="4" y="1" width="7" height="7" fill="none" stroke="#cdcdcd" stroke-width="0.9"/><circle cx="3.6" cy="7.4" r="2.8" fill="#535353" stroke="#cdcdcd" stroke-width="0.9"/></svg>
<div class="a" style="left:999px;top:252.2px;width:14.6px;height:12.4px;background:#3a3a3a"></div>
<svg class="a" style="left:1000.8px;top:253.25px" width="12" height="10.5" viewBox="0 0 12 10.5"><path d="M6 0.8 L11.4 3.6 L6 6.4 L0.6 3.6 Z" fill="#e8e8e8"/><path d="M1.8 5.8 L0.6 6.6 L6 9.4 L11.4 6.6 L10.2 5.8 L6 8 Z" fill="#e8e8e8"/></svg>
<svg class="a" style="left:1000.8px;top:268.1px" width="12" height="11" viewBox="0 0 12 11"><rect x="1.5" y="0.8" width="8.8" height="9" fill="none" stroke="#cdcdcd" stroke-width="0.9"/><path d="M5.6 0.8 V5 L7 4 L8.4 5 V0.8" fill="#cdcdcd"/></svg>
<svg class="a" style="left:1001px;top:283.9px" width="11.5" height="11" viewBox="0 0 11.5 11"><path d="M5 1.2 H1 V10.2 H9.8 V6" fill="none" stroke="#cdcdcd" stroke-width="0.9"/><path d="M5.2 6 L10.6 0.6 M7.4 0.6 H10.6 V3.8" fill="none" stroke="#cdcdcd" stroke-width="0.9"/></svg>
<svg class="a" style="left:1000.8px;top:300.5px" width="11.5" height="10.5" viewBox="0 0 11.5 10.5"><rect x="0.6" y="0.6" width="5.4" height="5.6" fill="none" stroke="#c4c4c4" stroke-width="0.9"/><rect x="3" y="4" width="7.8" height="5.8" fill="#535353" stroke="#c4c4c4" stroke-width="0.9"/></svg>
</div>
<div id="layers" class="a" style="left:857.3px;top:243.0px;width:137px;height:126.5px;background:#535353;border-top:0.8px solid #383838;box-shadow:0 1px 2px rgba(0,0,0,0.35)">
<div class="a" style="left:0;top:0;width:137px;height:17.4px;background:#424242"></div>
<div class="a" style="left:0;top:0;width:29.9px;height:17.4px;background:#535353"></div>
<span class="a" style="left:5.3px;top:6.0px;font-size:5.9px;line-height:7px;font-weight:bold;color:#e6e6e6;white-space:nowrap">Layers</span>
<span class="a" style="left:34.2px;top:6.0px;font-size:5.95px;line-height:7px;color:#bdbdbd;white-space:nowrap">Librar</span>
<div class="a" style="left:53px;top:0;width:0.8px;height:17.4px;background:#3a3a3a"></div>
<span class="a" style="left:58.1px;top:6.0px;font-size:5.95px;line-height:7px;color:#bdbdbd;white-space:nowrap">Asset</span>
<div class="a" style="left:76.9px;top:0;width:0.8px;height:17.4px;background:#3a3a3a"></div>
<span class="a" style="left:80.9px;top:6.0px;font-size:5.95px;line-height:7px;color:#bdbdbd;white-space:nowrap">Artboa</span>
<div class="a" style="left:101.5px;top:0;width:0.8px;height:17.4px;background:#3a3a3a"></div>
<svg class="a" style="left:113.5px;top:7.6px" width="5" height="3.4" viewBox="0 0 5 3.4"><path d="M0.4 0.3 L1.8 1.7 L0.4 3.1 M2.8 0.3 L4.2 1.7 L2.8 3.1" fill="none" stroke="#bdbdbd" stroke-width="0.6"/></svg>
<div class="a" style="left:122.8px;top:7.0px;width:0.8px;height:5.4px;background:#bdbdbd"></div>
<div class="a" style="left:127.5px;top:7.3px;width:5.6px;height:0.8px;background:#bdbdbd;box-shadow:0 1.6px 0 #bdbdbd,0 3.2px 0 #bdbdbd"></div>
<div class="a" style="left:3.5px;top:19.9px;width:129.5px;height:90.2px;border:0.7px solid #4a4a4a"></div>
<div class="a" style="left:3.5px;top:20.8px;width:129.5px;height:11.5px;background:#4f5f76"></div>
<div class="a" style="left:15.5px;top:20.8px;width:0.7px;height:11.5px;background:#475468"></div>
<div class="a" style="left:26.5px;top:20.8px;width:0.7px;height:11.5px;background:#475468"></div>
<div class="a" style="left:113px;top:20.8px;width:0.7px;height:11.5px;background:#475468"></div>
<svg class="a" style="left:6px;top:24.0px" width="7" height="5" viewBox="0 0 7 5"><path d="M0.3 2.5 Q3.5 -0.8 6.7 2.5 Q3.5 5.8 0.3 2.5 Z" fill="#c8c8c8"/><circle cx="3.5" cy="2.5" r="1" fill="#4f5f76"/></svg>
<div class="a" style="left:28.5px;top:21.7px;width:1.4px;height:9.8px;background:#4a82f0"></div>
<svg class="a" style="left:34.3px;top:24.8px" width="3" height="4" viewBox="0 0 3 4"><path d="M0.6 0.4 L2.2 2 L0.6 3.6" fill="none" stroke="#d6d6d6" stroke-width="0.7"/></svg>
<div class="a" style="left:44.8px;top:21.6px;width:10.2px;height:10.2px;background:#d5cab6;border:0.8px solid #2c2c2c;box-shadow:inset 0 0 0 0.8px #f0ebe0"></div>
<span class="a" style="left:57.8px;top:23.6px;font-size:5.9px;line-height:7px;color:#e2e2e2;white-space:nowrap">Layer 1</span>
<svg class="a" style="left:116.3px;top:23.9px" width="5.5" height="5.5" viewBox="0 0 5.5 5.5"><circle cx="2.75" cy="2.75" r="2.1" fill="none" stroke="#d0d0d0" stroke-width="0.6"/></svg>
<div class="a" style="left:124.5px;top:23.9px;width:4.8px;height:5px;background:#4f80ff;border:0.7px solid #1f2a44"></div>
<svg class="a" style="left:129.5px;top:20.8px" width="3.5" height="3.5" viewBox="0 0 3.5 3.5"><path d="M0 0 H3.5 V3.5 Z" fill="#e6e6e6"/></svg>
<span class="a" style="left:3.9px;top:113.0px;font-size:5.9px;line-height:7px;color:#c0c0c0;white-space:nowrap">1 Layer</span>
<svg class="a" style="left:40.5px;top:111.9px" width="8" height="8" viewBox="0 0 8 8"><path d="M3.5 1 H0.5 V7.5 H7 V4.5" fill="none" stroke="#c8c8c8" stroke-width="0.7"/><path d="M3.5 4.5 L7.5 0.5 M5 0.5 H7.5 V3" fill="none" stroke="#c8c8c8" stroke-width="0.7"/></svg>
<svg class="a" style="left:55.2px;top:111.9px" width="8" height="8" viewBox="0 0 8 8"><circle cx="3" cy="3" r="2.3" fill="none" stroke="#c8c8c8" stroke-width="0.7"/><path d="M4.7 4.7 L7.5 7.5" stroke="#c8c8c8" stroke-width="1"/></svg>
<svg class="a" style="left:69.4px;top:111.9px" width="8" height="8" viewBox="0 0 8 8"><rect x="0.5" y="0.5" width="5" height="5" fill="#777" stroke="#c8c8c8" stroke-width="0.6"/><rect x="2.5" y="2.5" width="5" height="5" fill="#535353" stroke="#c8c8c8" stroke-width="0.6"/><path d="M2.5 5.5 L5.5 2.5" stroke="#c8c8c8" stroke-width="0.6"/></svg>
<svg class="a" style="left:82.9px;top:112.2px" width="10" height="7.5" viewBox="0 0 10 7.5"><rect x="3.5" y="1.5" width="6" height="5.5" fill="none" stroke="#c8c8c8" stroke-width="0.7"/><path d="M0.5 0.5 V3 H5 M3.8 2 L5 3 L3.8 4 M6.5 3 V5.5 M5.3 4.2 H7.7" fill="none" stroke="#c8c8c8" stroke-width="0.6"/></svg>
<svg class="a" style="left:100px;top:111.9px" width="7.5" height="7.5" viewBox="0 0 7.5 7.5"><rect x="0.5" y="0.5" width="6.5" height="6.5" fill="none" stroke="#c8c8c8" stroke-width="0.7"/><path d="M3.75 2 V5.5 M2 3.75 H5.5" stroke="#c8c8c8" stroke-width="0.7"/></svg>
<svg class="a" style="left:114.5px;top:111.7px" width="7" height="8" viewBox="0 0 7 8"><path d="M0.5 1.5 H6.5 M2.5 1.5 V0.5 H4.5 V1.5 M1.2 1.5 L1.6 7.5 H5.4 L5.8 1.5" fill="none" stroke="#707070" stroke-width="0.6"/></svg>
<div class="a" style="left:0;top:122.3px;width:137px;height:3.4px;background:#444"></div>
<div class="a" style="left:61px;top:123.3px;width:10px;height:1.2px;background:#3a3a3a"></div>
</div>
<div id="dialog" class="a" style="left:483.3px;top:129px;width:192.7px;height:112.7px;background:#ebebeb;border-radius:3px;box-shadow:0 0 0 0.4px rgba(0,0,0,0.1),0 8px 18px rgba(0,0,0,0.45),0 1px 3px rgba(0,0,0,0.08);overflow:hidden;color:#222;font-size:6.3px;line-height:8px;letter-spacing:-0.08px">
<div class="a" style="left:0;top:0;width:192.7px;height:9.8px;background:linear-gradient(#e4e4e4,#d3d3d3);border-bottom:0.5px solid #c4c4c4"></div>
<span class="a" style="left:26.7px;top:18.5px;color:#7c7c7c;white-space:nowrap">Save As:</span>
<div class="a" style="left:52.3px;top:16.6px;width:114.6px;height:11.4px;border-radius:1.4px;background:#fff;box-shadow:0 0 0 1.3px #8db3ef"></div>
<div class="a" style="left:54.6px;top:19.2px;width:11.4px;height:6.8px;background:#b3ccf3"></div>
<span class="a" style="left:54.6px;top:18.6px;color:#1e1e1e;white-space:nowrap">BED.png</span>
<span class="a" style="left:35.7px;top:32.9px;color:#7c7c7c;white-space:nowrap">Tags:</span>
<div class="a" style="left:53.1px;top:31.2px;width:113.3px;height:9.5px;background:#fff;box-shadow:0 0 0 0.5px #d0d0d0"></div>
<span class="a" style="left:30.9px;top:46.8px;color:#7c7c7c;white-space:nowrap">Where:</span>
<div class="a" style="left:53.4px;top:45.8px;width:99.2px;height:8.5px;background:#fff;border-radius:1.3px;box-shadow:0 0 0 0.3px rgba(0,0,0,0.12),0 0.4px 0.6px rgba(0,0,0,0.22)"></div>
<div class="a" style="left:145.5px;top:45.8px;width:7.1px;height:8.5px;border-radius:0 1.3px 1.3px 0;background:linear-gradient(#5b9bf6,#2d6fe8)"></div>
<svg class="a" style="left:147px;top:46.6px" width="4" height="7" viewBox="0 0 4 7"><path d="M0.7 2.4 L2 1 L3.3 2.4 M0.7 4.6 L2 6 L3.3 4.6" fill="none" stroke="#fff" stroke-width="0.6"/></svg>
<svg class="a" style="left:56.7px;top:47.8px" width="7" height="5.3" viewBox="0 0 7 5.3"><path d="M0 0.5 Q0 0 0.5 0 H2.6 L3.2 0.8 H6.5 Q7 0.8 7 1.3 V4.8 Q7 5.3 6.5 5.3 H0.5 Q0 5.3 0 4.8 Z" fill="#7fc2f3"/></svg>
<span class="a" style="left:65.9px;top:46.6px;color:#1e1e1e;white-space:nowrap">AI</span>
<div class="a" style="left:157.2px;top:46px;width:8.3px;height:8.3px;background:#fff;border-radius:1.3px;box-shadow:0 0 0 0.3px rgba(0,0,0,0.12),0 0.4px 0.6px rgba(0,0,0,0.22)"></div>
<svg class="a" style="left:159.4px;top:48.8px" width="4" height="3" viewBox="0 0 4 3"><path d="M0.5 0.6 L2 2.1 L3.5 0.6" fill="none" stroke="#333" stroke-width="0.7"/></svg>
<div class="a" style="left:0;top:59.4px;width:192.7px;height:0.6px;background:#d6d6d6"></div>
<span class="a" style="left:5.6px;top:63.5px;color:#2a2a2a;white-space:nowrap">Format:</span>
<div class="a" style="left:30.9px;top:63.1px;width:132.8px;height:8.2px;background:#fff;border-radius:1.3px;box-shadow:0 0 0 0.3px rgba(0,0,0,0.12),0 0.4px 0.6px rgba(0,0,0,0.22)"></div>
<div class="a" style="left:156.7px;top:62.2px;width:7px;height:9.2px;border-radius:1.3px;background:linear-gradient(#5b9bf6,#2d6fe8)"></div>
<svg class="a" style="left:158.2px;top:63.3px" width="4" height="7" viewBox="0 0 4 7"><path d="M0.7 2.4 L2 1 L3.3 2.4 M0.7 4.6 L2 6 L3.3 4.6" fill="none" stroke="#fff" stroke-width="0.6"/></svg>
<span class="a" style="left:34.4px;top:63.5px;color:#1e1e1e;white-space:nowrap">PNG (png)</span>
<div class="a" style="left:30.5px;top:78.8px;width:5.5px;height:5.7px;background:#fff;border-radius:1px;box-shadow:0 0 0 0.5px #c8c8c8"></div>
<span class="a" style="left:38.6px;top:77.5px;color:#1e1e1e;white-space:nowrap">Use Artboards</span>
<svg class="a" style="left:96px;top:78.6px" width="6.4" height="6.4" viewBox="0 0 6.4 6.4"><circle cx="3.2" cy="3.2" r="2.9" fill="#f8f8f8" stroke="#dadada" stroke-width="0.4"/><circle cx="3.2" cy="3.2" r="1" fill="#9a9a9a"/></svg>
<span class="a" style="left:104.4px;top:77.5px;color:#a6a6a6;white-space:nowrap">All</span>
<svg class="a" style="left:125.3px;top:78.6px" width="6.4" height="6.4" viewBox="0 0 6.4 6.4"><circle cx="3.2" cy="3.2" r="2.9" fill="#f6f6f6" stroke="#dadada" stroke-width="0.4"/></svg>
<span class="a" style="left:133.7px;top:77.5px;color:#a6a6a6;white-space:nowrap">Range:</span>
<div class="a" style="left:155.2px;top:77.1px;width:32.7px;height:8.3px;background:#fafafa;box-shadow:0 0 0 0.4px #dedede"></div>
<span class="a" style="left:156.8px;top:77.6px;color:#b0b0b0;white-space:nowrap">1</span>
<div class="a" style="left:0;top:89.3px;width:192.7px;height:0.6px;background:#d6d6d6"></div>
<div class="a" style="left:109.9px;top:94.9px;width:34.4px;height:8.8px;background:#fff;border-radius:1.4px;box-shadow:0 0.3px 0.8px rgba(0,0,0,0.32)"></div>
<span class="a" style="left:117.8px;top:95.8px;color:#1e1e1e;white-space:nowrap">Cancel</span>
<div class="a" style="left:148.7px;top:94.6px;width:35px;height:9.5px;border-radius:1.4px;background:linear-gradient(#69a4f8,#2f6ef0);box-shadow:0 0 0 0.3px #2a62d8"></div>
<span class="a" style="left:157.4px;top:95.8px;color:#fff;white-space:nowrap">Export</span>
</div>
<div id="vsitems">
<svg class="a" style="left:987.5px;top:69.8px" width="5" height="3.5" viewBox="0 0 5 3.5"><path d="M0.5 3 L2.5 1 L4.5 3" fill="none" stroke="#8a8a8a" stroke-width="0.7"/></svg>
<svg class="a" style="left:987.5px;top:580.3px" width="5" height="3.5" viewBox="0 0 5 3.5"><path d="M0.5 0.5 L2.5 2.5 L4.5 0.5" fill="none" stroke="#8a8a8a" stroke-width="0.7"/></svg>
<div class="a" style="left:40.7px;top:588.5px;width:945px;height:2px;background:#3b3b3b"></div>
</div>
</body></html>
